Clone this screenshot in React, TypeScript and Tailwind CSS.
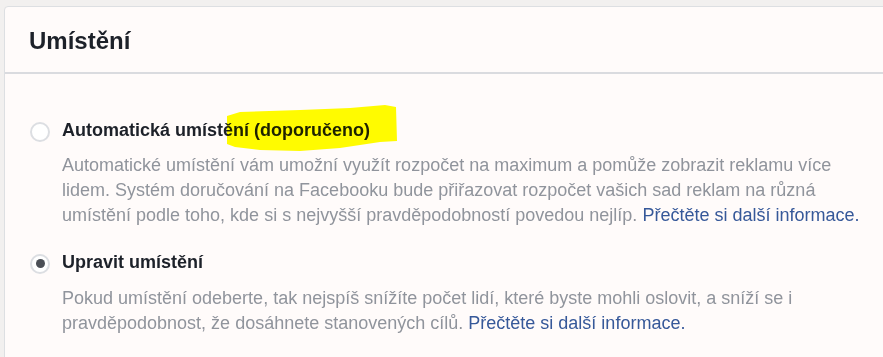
const font = { fontFamily: '"Liberation Sans", Arial, Helvetica, sans-serif' }

interface PlacementOption {
  id: string
  label: string
  description: string
  selected: boolean
}

const options: PlacementOption[] = [
  {
    id: 'auto',
    label: 'Automatická umístění (doporučeno)',
    description:
      'Automatické umístění vám umožní využít rozpočet na maximum a pomůže zobrazit reklamu více lidem. Systém doručování na Facebooku bude přiřazovat rozpočet vašich sad reklam na různá umístění podle toho, kde si s nejvyšší pravděpodobností povedou nejlíp.',
    selected: false,
  },
  {
    id: 'edit',
    label: 'Upravit umístění',
    description:
      'Pokud umístění odeberte, tak nejspíš snížíte počet lidí, které byste mohli oslovit, a sníží se i pravděpodobnost, že dosáhnete stanovených cílů.',
    selected: true,
  },
]

function Radio({ checked }: { checked: boolean }) {
  return (
    <span className="flex h-[20px] w-[20px] shrink-0 items-center justify-center rounded-full border-2 border-[#dcdee2] bg-white">
      {checked && <span className="h-[9px] w-[9px] rounded-full bg-[#4b4f56]" />}
    </span>
  )
}

export default function App() {
  return (
    <div className="relative h-[357px] w-[883px] overflow-hidden bg-[#f2f0ef] pl-[4px] pt-[6px]" style={font}>
      <div className="w-[920px] rounded-[4px] border border-[#dddfe2] bg-[#fffbfa]">
        {/* Header */}
        <div className="flex h-[67px] items-center border-b-2 border-[#dadbdf] px-[24px] pt-[2px]">
          <h2 className="text-[24px] font-bold leading-[28px] text-[#1d2129]">Umístění</h2>
        </div>

        {/* Options */}
        <div className="pl-[24px] pt-[44px] pb-[40px]">
          {options.map((opt, i) => (
            <div key={opt.id} className={i > 0 ? 'mt-[22px]' : ''}>
              <div className="flex items-center">
                <span className="ml-[1px] mr-[12px] mt-[2px]">
                  <Radio checked={opt.selected} />
                </span>
                <span className="text-[18px] font-bold leading-[25px] text-[#1d2129]">{opt.label}</span>
              </div>
              <p className={`${i > 0 ? 'mt-[11px]' : 'mt-[10px]'} ml-[33px] w-[815px] text-[18px] leading-[25px] text-[#90949c]`}>
                {opt.description}{' '}
                <a className="text-[#365899]">Přečtěte si další informace.</a>
              </p>
            </div>
          ))}
        </div>
      </div>

      {/* yellow marker highlight */}
      <svg className="pointer-events-none absolute left-0 top-0 mix-blend-multiply" width="883" height="357">
        <polygon
          fill="#ffff00"
          points="227,116 240,112 300,110 350,108 385,105 396,107 397,141 380,142 340,148 300,151 260,150 235,147 227,144"
        />
      </svg>
    </div>
  )
}
